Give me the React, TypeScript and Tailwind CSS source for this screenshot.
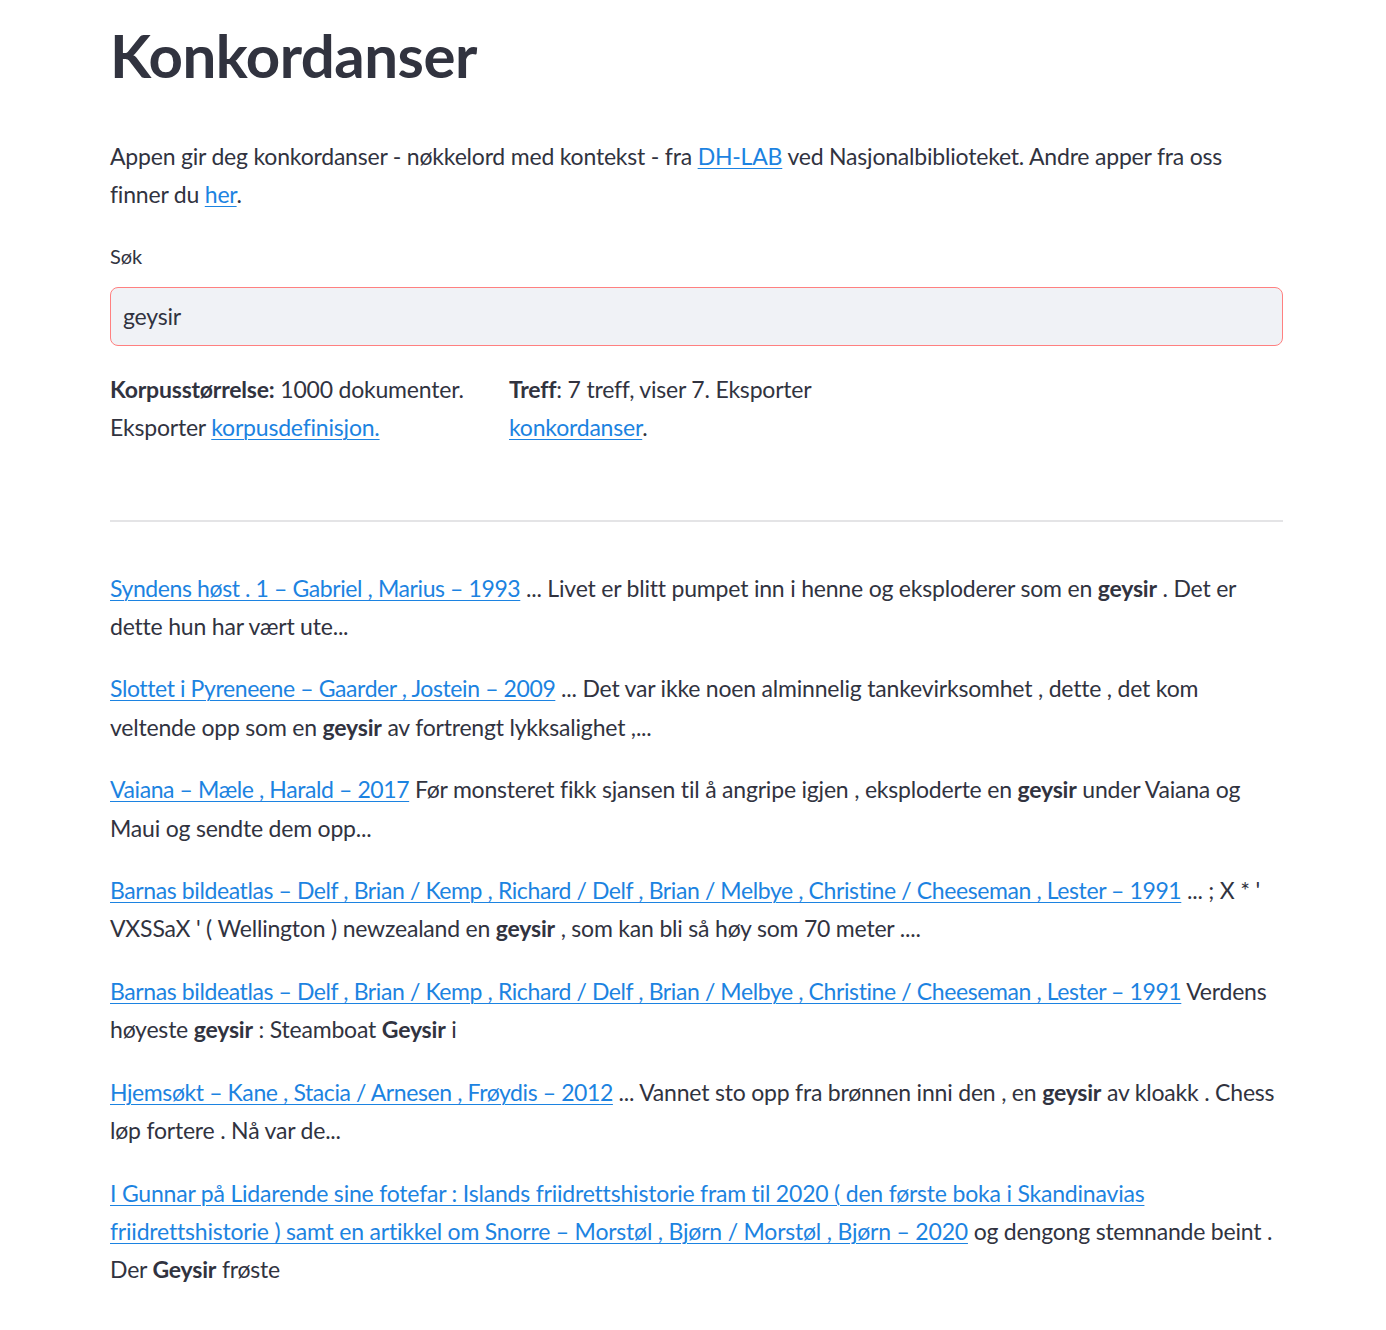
import React from "react";

const Link = ({ children, tight }: { children: React.ReactNode; tight?: boolean }) => (
  <a
    href="#"
    className={
      tight
        ? "text-[#1c83e1] underline underline-offset-[3px] decoration-[1px] tracking-[-0.4px]"
        : "text-[#1c83e1] underline underline-offset-[3px] decoration-[1px]"
    }
  >
    {children}
  </a>
);

const B = ({ children }: { children: React.ReactNode }) => <b className="font-bold">{children}</b>;

const Entry = ({ children }: { children: React.ReactNode }) => (
  <p className="mb-6 whitespace-nowrap">{children}</p>
);

export default function App() {
  return (
    <div
      className="min-h-[1330px] bg-white text-[#31333F]"
      style={{ fontFamily: "Lato, 'Noto Sans', sans-serif" }}
    >
      <div className="ml-[110px] w-[1173px] pt-[19px] text-[23px] leading-[38.4px] tracking-[-0.2px]">
        <h1 className="text-[60px] leading-[72px] font-bold tracking-[-0.5px]">Konkordanser</h1>

        <p className="mt-[46px]">
          Appen gir deg konkordanser - nøkkelord med kontekst - fra <Link>DH-LAB</Link> ved Nasjonalbiblioteket. Andre apper fra oss
          <br />
          finner du <Link>her</Link>.
        </p>

        <div className="mt-[27px] text-[20px] leading-[30px] tracking-normal">Søk</div>
        <div className="mt-4 flex h-[59px] items-center rounded-[8px] border-[1.5px] border-[#ff8080] bg-[#f0f2f6] pl-[12px]">
          <span>geysir</span>
        </div>

        <div className="mt-[24px] grid grid-cols-3 gap-6">
          <div>
            <B>Korpusstørrelse:</B> 1000 dokumenter.
            <br />
            Eksporter <Link>korpusdefinisjon.</Link>
          </div>
          <div>
            <B>Treff</B>: 7 treff, viser 7. Eksporter
            <br />
            <Link>konkordanser</Link>.
          </div>
          <div></div>
        </div>

        <hr className="mt-[73px] border-0 border-t-2 border-[#e4e4e6]" />

        <div className="mt-[47px] w-[1200px]">
          <Entry>
            <Link tight>Syndens høst . 1 – Gabriel , Marius – 1993</Link> ... Livet er blitt pumpet inn i henne og eksploderer som en <B>geysir</B> . Det er
            <br />
            dette hun har vært ute...
          </Entry>
          <Entry>
            <Link tight>Slottet i Pyreneene – Gaarder , Jostein – 2009</Link> ... Det var ikke noen alminnelig tankevirksomhet , dette , det kom
            <br />
            veltende opp som en <B>geysir</B> av fortrengt lykksalighet ,...
          </Entry>
          <Entry>
            <Link tight>Vaiana – Mæle , Harald – 2017</Link> Før monsteret fikk sjansen til å angripe igjen , eksploderte en <B>geysir</B> under Vaiana og
            <br />
            Maui og sendte dem opp...
          </Entry>
          <Entry>
            <Link tight>Barnas bildeatlas – Delf , Brian / Kemp , Richard / Delf , Brian / Melbye , Christine / Cheeseman , Lester – 1991</Link> ... ; X * '
            <br />
            VXSSaX ' ( Wellington ) newzealand en <B>geysir</B> , som kan bli så høy som 70 meter ....
          </Entry>
          <Entry>
            <Link tight>Barnas bildeatlas – Delf , Brian / Kemp , Richard / Delf , Brian / Melbye , Christine / Cheeseman , Lester – 1991</Link> Verdens
            <br />
            høyeste <B>geysir</B> : Steamboat <B>Geysir</B> i
          </Entry>
          <Entry>
            <Link tight>Hjemsøkt – Kane , Stacia / Arnesen , Frøydis – 2012</Link> ... Vannet sto opp fra brønnen inni den , en <B>geysir</B> av kloakk . Chess
            <br />
            løp fortere . Nå var de...
          </Entry>
          <Entry>
            <Link>
              I Gunnar på Lidarende sine fotefar : Islands friidrettshistorie fram til 2020 ( den første boka i Skandinavias
              <br />
              friidrettshistorie ) samt en artikkel om Snorre – Morstøl , Bjørn / Morstøl , Bjørn – 2020
            </Link>{" "}
            og dengong stemnande beint .
            <br />
            Der <B>Geysir</B> frøste
          </Entry>
        </div>
      </div>
    </div>
  );
}
